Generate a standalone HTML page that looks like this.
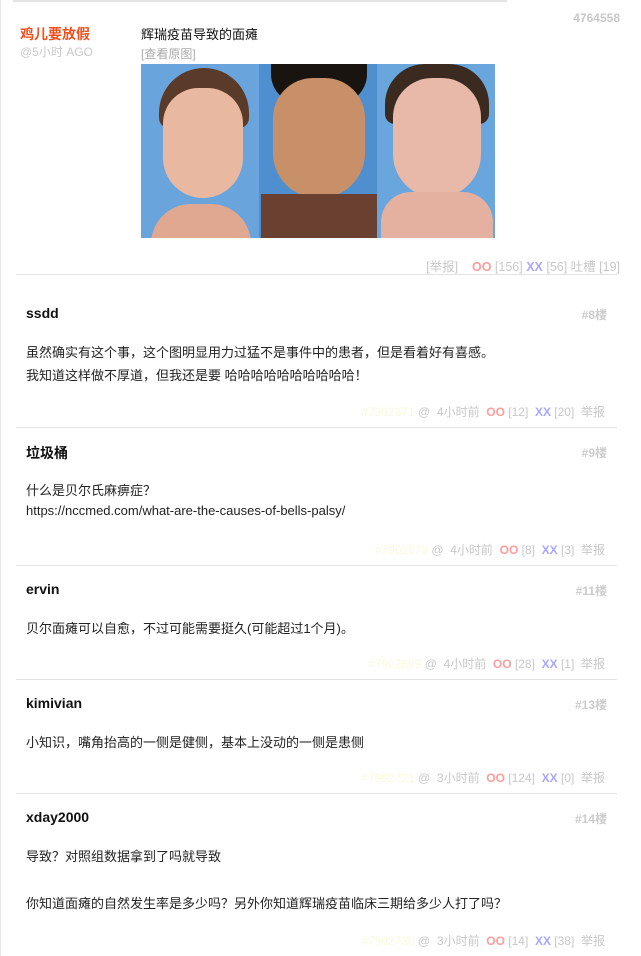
<!DOCTYPE html>
<html><head><meta charset="utf-8"><style>
*{margin:0;padding:0;box-sizing:border-box}
body{width:641px;height:956px;background:#fff;font-family:"Liberation Sans","Noto Sans CJK SC",sans-serif;position:relative;overflow:hidden;color:#222}
.a{position:absolute;white-space:nowrap}
.g{color:#c8c8c8}
.oo{color:#ff9c9c;font-weight:bold}
.xx{color:#a8a8ff;font-weight:bold}
.hr{position:absolute;left:16px;width:601px;height:1px;background:#e4e4e4}
.u{font-size:14px;font-weight:bold;color:#111;left:26px}
.f{font-size:12px;right:36px;color:#c8c8c8}
.t{font-size:13px;left:26px;color:#222}
.fl{font-size:12px;right:34px;color:#ccc;font-weight:bold}
</style></head><body>
<div style="position:absolute;left:0;top:0;width:1px;height:956px;background:#e6e6e6"></div>
<div style="position:absolute;left:13px;top:0;width:494px;height:2px;background:#e4e4e4"></div>
<div class="a" style="left:20px;top:24px;font-size:14px;font-weight:bold;color:#f0501e">鸡儿要放假</div>
<div class="a g" style="left:20px;top:43px;font-size:12px">@5小时 AGO</div>
<div class="a" style="right:21px;top:11px;font-size:12px;color:#c8c8c8;font-weight:bold">4764558</div>
<div class="a" style="left:141px;top:24px;font-size:13px;color:#111">辉瑞疫苗导致的面瘫</div>
<div class="a g" style="left:141px;top:45px;font-size:12px;color:#aaa">[查看原图]</div>
<div style="position:absolute;left:141px;top:64px;width:354px;height:174px;overflow:hidden;background:#5a9ad8">
 <div style="position:absolute;left:0;top:0;width:118px;height:174px;background:#6aa4dc"></div>
 <div style="position:absolute;left:18px;top:4px;width:90px;height:60px;border-radius:45px 45px 10px 10px;background:#5a3a28"></div>
 <div style="position:absolute;left:22px;top:24px;width:80px;height:110px;border-radius:40px 40px 45px 45px;background:#e8b8a0"></div>
 <div style="position:absolute;left:10px;top:140px;width:100px;height:40px;border-radius:40px 40px 0 0;background:#e0a890"></div>
 <div style="position:absolute;left:118px;top:0;width:118px;height:174px;background:#4f8fd0"></div>
 <div style="position:absolute;left:130px;top:0;width:96px;height:40px;background:#1a1410;border-radius:0 0 30px 30px"></div>
 <div style="position:absolute;left:132px;top:14px;width:92px;height:120px;border-radius:40px 40px 45px 45px;background:#c89068"></div>
 <div style="position:absolute;left:120px;top:130px;width:116px;height:44px;background:#6a4030"></div>
 <div style="position:absolute;left:236px;top:0;width:118px;height:174px;background:#6aa6de"></div>
 <div style="position:absolute;left:244px;top:0;width:104px;height:60px;border-radius:40px 40px 10px 10px;background:#3a2a20"></div>
 <div style="position:absolute;left:252px;top:14px;width:88px;height:120px;border-radius:40px 40px 45px 45px;background:#e8b8a8"></div>
 <div style="position:absolute;left:240px;top:128px;width:112px;height:46px;border-radius:30px 30px 0 0;background:#e4b0a0"></div>
</div>
<div class="a" style="right:21px;top:256px;font-size:12.5px;color:#c8c8c8">[举报] &nbsp;&nbsp;&nbsp;<span class="oo">OO</span> [156] <span class="xx">XX</span> [56] 吐槽 [19]</div>
<div class="hr" style="top:274px"></div>

<div class="a u" style="top:305px">ssdd</div>
<div class="a fl" style="top:306px">#8楼</div>
<div class="a t" style="top:342px">虽然确实有这个事，这个图明显用力过猛不是事件中的患者，但是看着好有喜感。</div>
<div class="a t" style="top:365px">我知道这样做不厚道，但我还是要 哈哈哈哈哈哈哈哈哈哈！</div>
<div class="a f" style="top:403px"><span style="color:#fafadc">#7902671</span> @ &nbsp;4小时前 &nbsp;<span class="oo">OO</span> [12] &nbsp;<span class="xx">XX</span> [20] &nbsp;举报</div>
<div class="hr" style="top:427px"></div>

<div class="a u" style="top:443px">垃圾桶</div>
<div class="a fl" style="top:444px">#9楼</div>
<div class="a t" style="top:480px">什么是贝尔氏麻痹症？</div>
<div class="a t" style="top:503px">https://nccmed.com/what-are-the-causes-of-bells-palsy/</div>
<div class="a f" style="top:541px"><span style="color:#fafadc">#7902679</span> @ &nbsp;4小时前 &nbsp;<span class="oo">OO</span> [8] &nbsp;<span class="xx">XX</span> [3] &nbsp;举报</div>
<div class="hr" style="top:565px"></div>

<div class="a u" style="top:581px">ervin</div>
<div class="a fl" style="top:582px">#11楼</div>
<div class="a t" style="top:618px">贝尔面瘫可以自愈，不过可能需要挺久(可能超过1个月)。</div>
<div class="a f" style="top:655px"><span style="color:#fafadc">#7902699</span> @ &nbsp;4小时前 &nbsp;<span class="oo">OO</span> [28] &nbsp;<span class="xx">XX</span> [1] &nbsp;举报</div>
<div class="hr" style="top:679px"></div>

<div class="a u" style="top:695px">kimivian</div>
<div class="a fl" style="top:696px">#13楼</div>
<div class="a t" style="top:732px">小知识，嘴角抬高的一侧是健侧，基本上没动的一侧是患侧</div>
<div class="a f" style="top:769px"><span style="color:#fafadc">#7902721</span> @ &nbsp;3小时前 &nbsp;<span class="oo">OO</span> [124] &nbsp;<span class="xx">XX</span> [0] &nbsp;举报</div>
<div class="hr" style="top:793px"></div>

<div class="a u" style="top:809px">xday2000</div>
<div class="a fl" style="top:810px">#14楼</div>
<div class="a t" style="top:846px">导致？对照组数据拿到了吗就导致</div>
<div class="a t" style="top:893px">你知道面瘫的自然发生率是多少吗？另外你知道辉瑞疫苗临床三期给多少人打了吗？</div>
<div class="a f" style="top:932px"><span style="color:#fafadc">#7902730</span> @ &nbsp;3小时前 &nbsp;<span class="oo">OO</span> [14] &nbsp;<span class="xx">XX</span> [38] &nbsp;举报</div>
</body></html>
